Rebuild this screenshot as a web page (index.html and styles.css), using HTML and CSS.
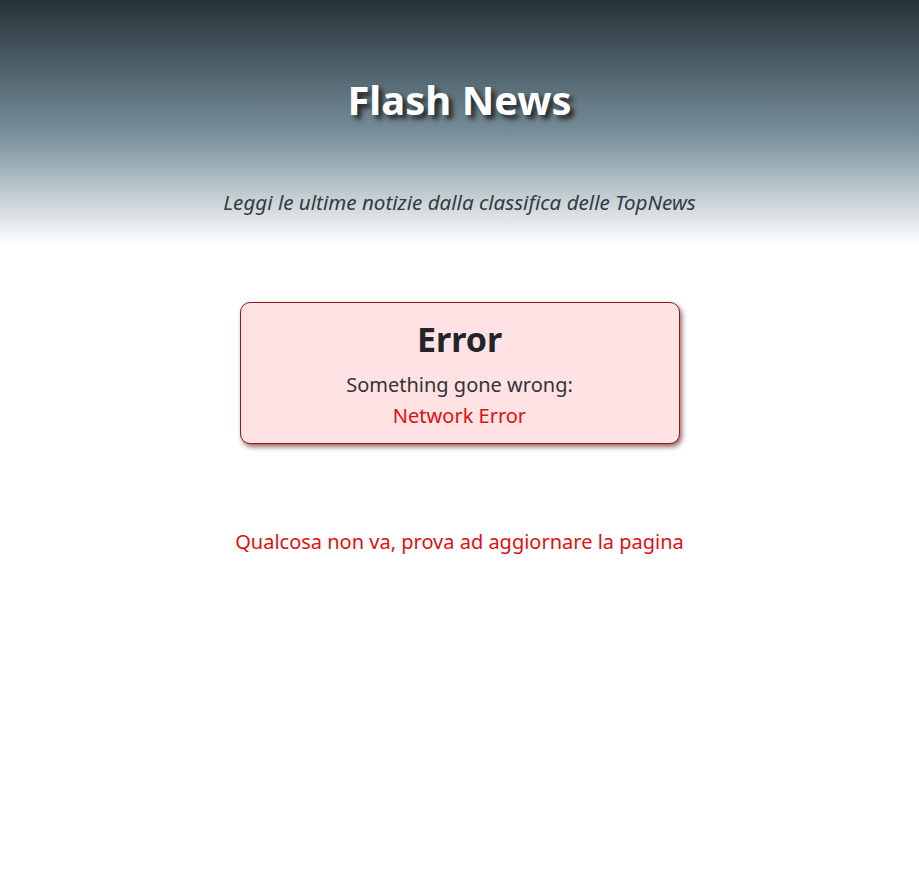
FILE: index.html
```html
<!DOCTYPE html>
<html lang="it">
<head>
<meta charset="utf-8">
<title>Flash News</title>
<link rel="stylesheet" href="styles.css">
</head>
<body>
<header class="hero">
  <h1 class="hero-title">Flash News</h1>
  <p class="hero-subtitle">Leggi le ultime notizie dalla classifica delle TopNews</p>
</header>
<main class="content">
  <div class="error-card">
    <h2 class="error-title">Error</h2>
    <p class="error-text">Something gone wrong:</p>
    <p class="error-detail">Network Error</p>
  </div>
  <p class="refresh-msg">Qualcosa non va, prova ad aggiornare la pagina</p>
</main>
</body>
</html>
```
FILE: styles.css
```css
* { box-sizing: border-box; }
html, body { margin: 0; padding: 0; }
body {
  font-family: "Noto Sans", "Open Sans", sans-serif;
  color: #212529;
  background: #fff;
  width: 919px;
  min-height: 894px;
}
.hero {
  height: 245px;
  background: linear-gradient(to bottom, #263238 0%, #78909c 55%, #ffffff 100%);
  text-align: center;
  padding-top: 72px;
}
.hero-title {
  margin: 0;
  font-size: 40px;
  line-height: 56px;
  font-weight: 700;
  color: #fff;
  text-shadow: 4px 4px 5px #222;
}
.hero-subtitle {
  margin: 60px 0 0;
  font-size: 20.6px;
  line-height: 28px;
  font-style: italic;
  color: #343a40;
}
.content {
  display: flex;
  flex-direction: column;
  align-items: center;
  padding-top: 57px;
}
.error-card {
  width: 440px;
  height: 142px;
  background: #ffe2e4;
  border: 1px solid #8b1a1a;
  border-radius: 10px;
  box-shadow: 2px 3px 5px rgba(90, 0, 0, 0.6);
  text-align: center;
  padding-top: 13px;
}
.error-title {
  margin: 0;
  font-size: 34px;
  line-height: 46px;
  font-weight: 700;
}
.error-text {
  margin: 8px 0 0;
  font-size: 20px;
  line-height: 30px;
  color: #333;
}
.error-detail {
  margin: 0;
  font-size: 20px;
  line-height: 32px;
  color: #e01010;
}
.refresh-msg {
  margin: 83px 0 0;
  font-size: 20px;
  line-height: 30px;
  color: #e01010;
}
```
